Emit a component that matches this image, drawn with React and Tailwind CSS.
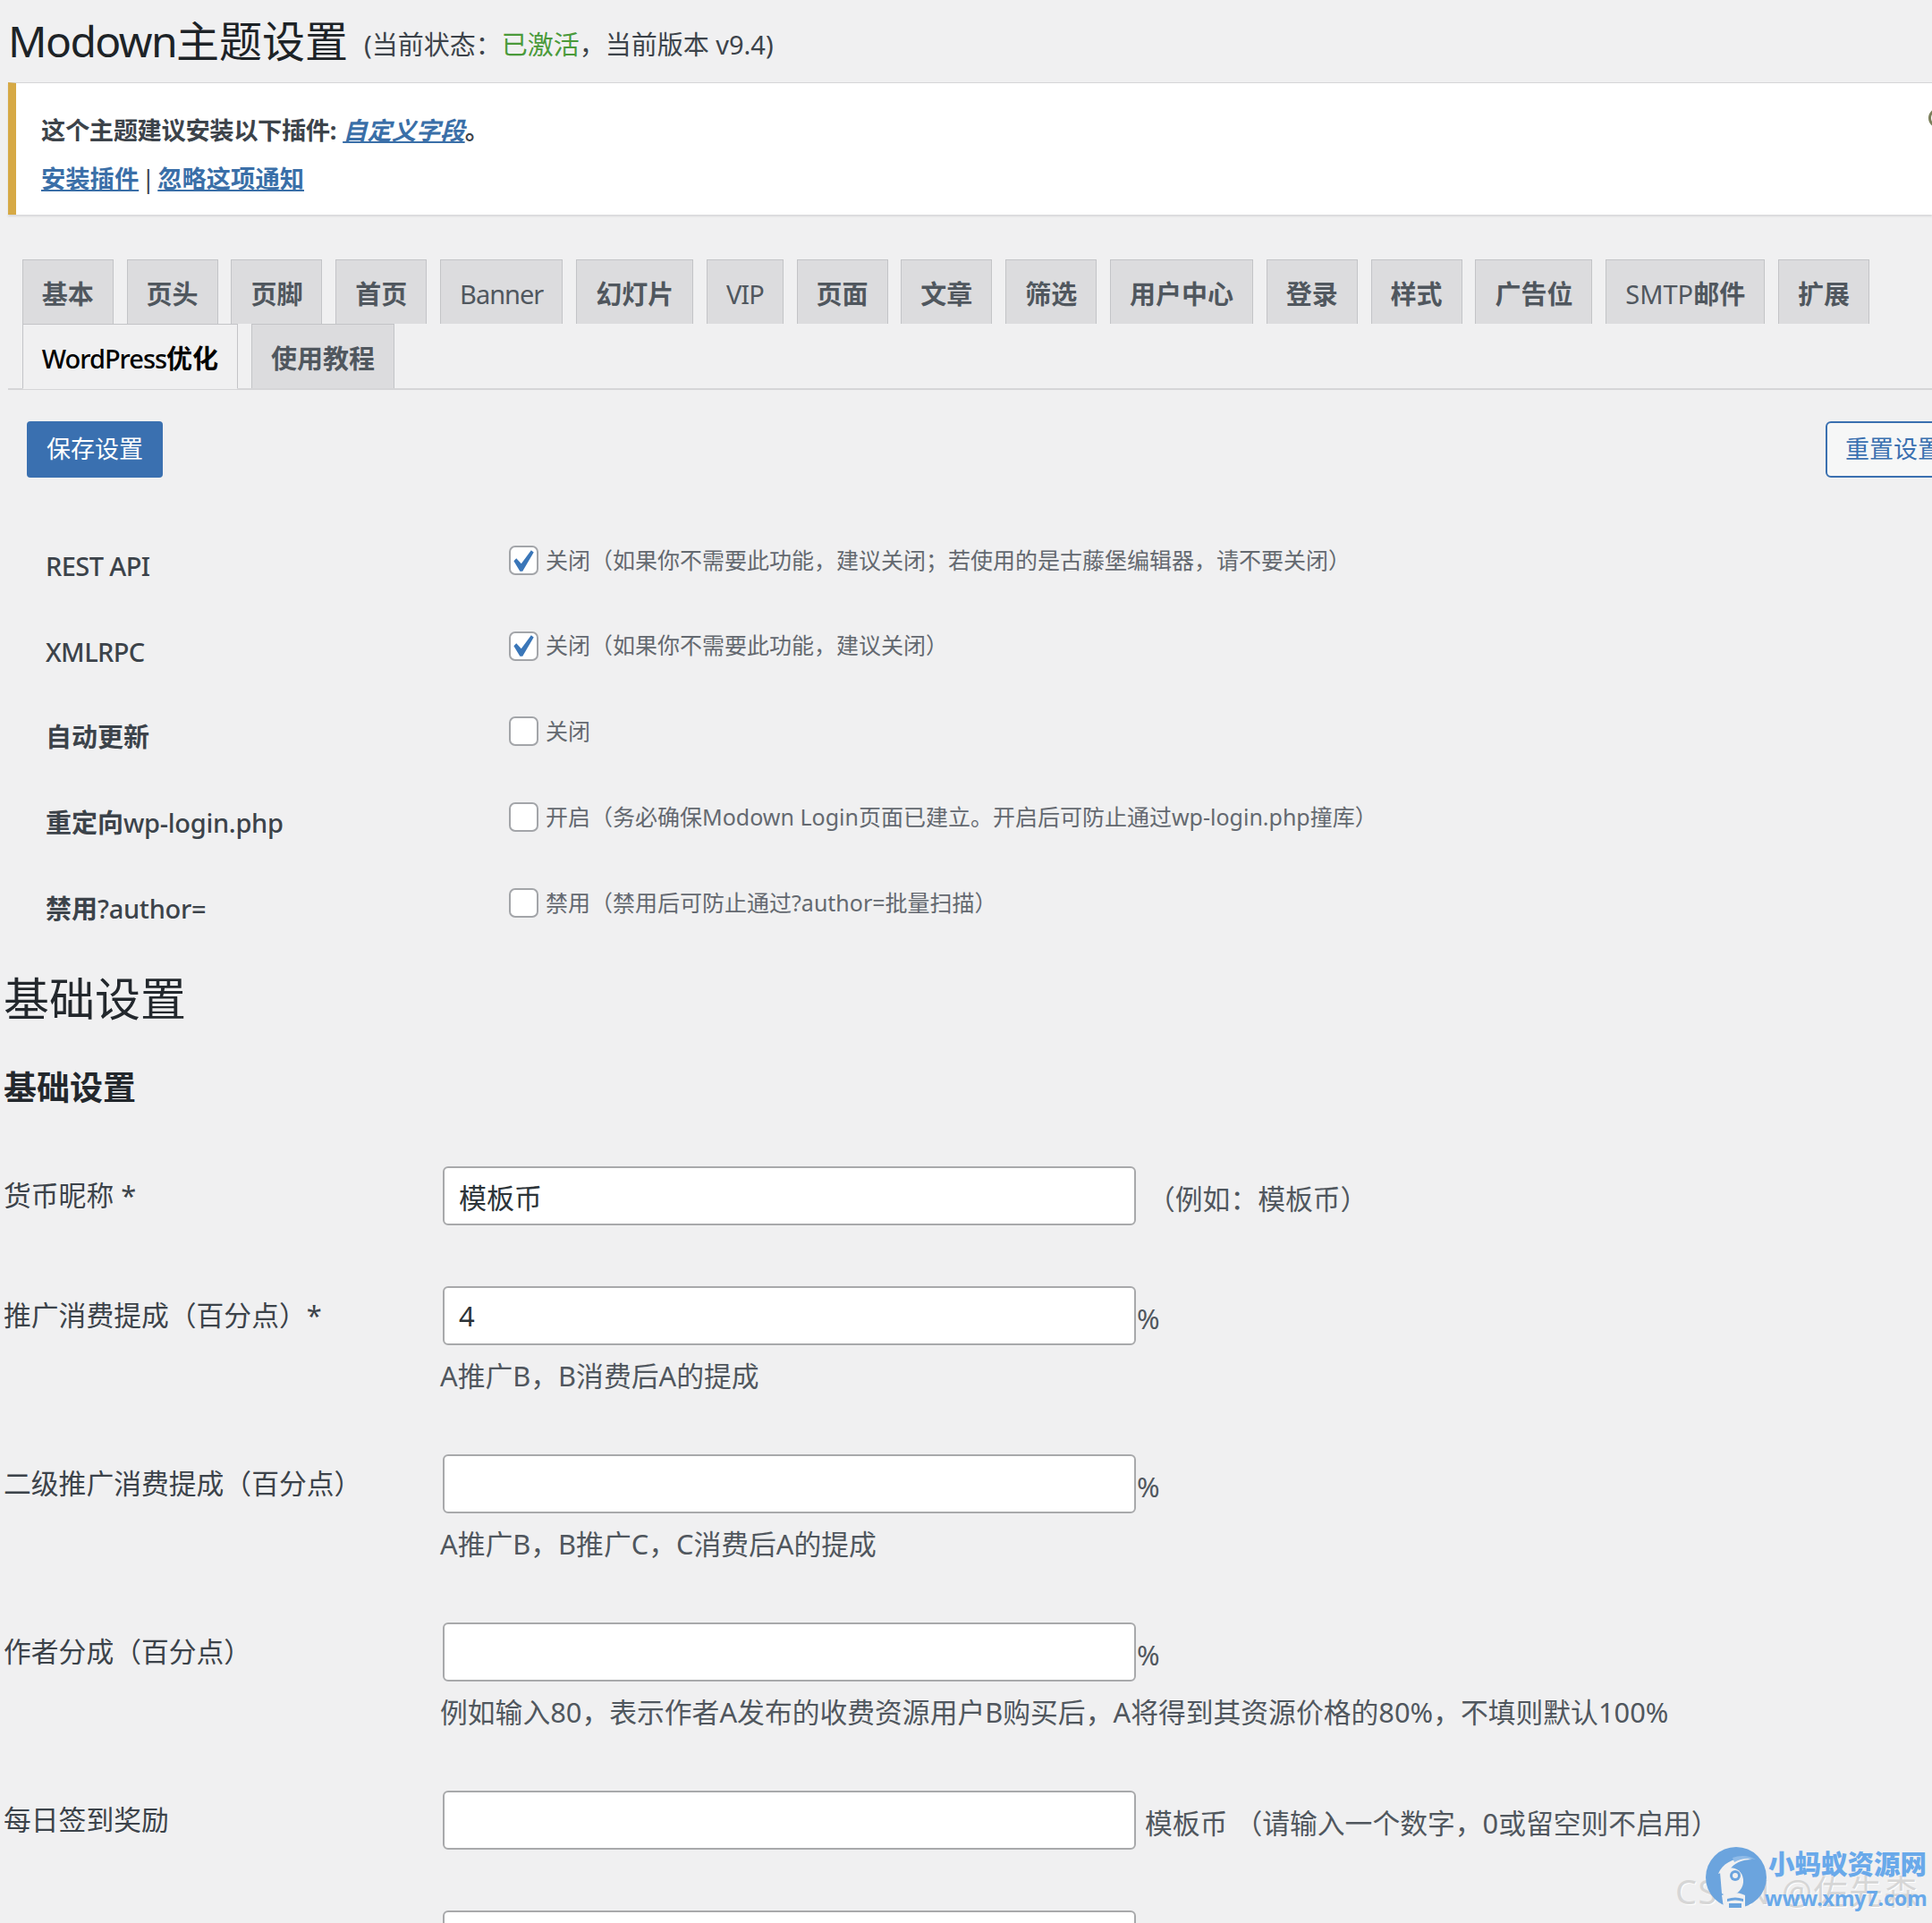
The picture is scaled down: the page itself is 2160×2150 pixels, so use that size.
import React from 'react';

const lat = 'font-normal tracking-[-1px]';

const tabs = [
  '基本', '页头', '页脚', '首页',
  <span className={lat}>Banner</span>,
  '幻灯片',
  <span className={lat}>VIP</span>,
  '页面', '文章', '筛选', '用户中心', '登录', '样式', '广告位',
  <><span className="font-normal">SMTP</span>邮件</>,
  '扩展',
];

const options = [
  { id: 'rest', label: <span className="tracking-[-0.6px]">REST API</span>, checked: true, text: '关闭（如果你不需要此功能，建议关闭；若使用的是古藤堡编辑器，请不要关闭）' },
  { id: 'xml', label: <span className="tracking-[-0.6px]">XMLRPC</span>, checked: true, text: '关闭（如果你不需要此功能，建议关闭）' },
  { id: 'auto', label: <b>自动更新</b>, text: '关闭' },
  { id: 'login', label: <><b>重定向</b><span className="tracking-[-0.3px]">wp-login.php</span></>, text: '开启（务必确保Modown Login页面已建立。开启后可防止通过wp-login.php撞库）' },
  { id: 'author', label: <><b>禁用</b><span className="tracking-[-0.3px]">?author=</span></>, text: '禁用（禁用后可防止通过?author=批量扫描）' },
];

function Tab({ children, active }) {
  return (
    <a className={active
      ? 'ml-[14.8px] h-[73px] -mb-[2px] pt-[4px] px-[21px] flex items-center border border-[#c3c4c7] border-b-[#f0f0f1] bg-[#f0f0f1] text-[29px] font-bold text-black'
      : 'ml-[14.8px] h-[72px] pt-[4px] px-[21px] flex items-center border border-b-0 border-[#c3c4c7] bg-[#dcdcde] text-[29px] font-bold text-[#50575e]'}>
      {children}
    </a>
  );
}

function Check({ checked }) {
  return (
    <span className="w-[33px] h-[33px] shrink-0 flex items-center justify-center rounded-[7px] border-2 border-[#a3a5a9] bg-white">
      {checked && (
        <svg className="w-[23px] h-[24px]" viewBox="5.6 4.8 10.7 9.5" preserveAspectRatio="none">
          <path fill="#3a76b8" d="M14.83 4.89l1.34.94-5.81 8.38H9.02L5.78 9.67l1.34-1.25 2.57 2.4z" />
        </svg>
      )}
    </span>
  );
}

function OptionRow({ label, checked, text }) {
  return (
    <div className="flex h-[95.7px]">
      <div className="w-[569px] shrink-0 pl-[51px] pt-[28px] text-[29px] leading-[40px] text-[#3c434a] font-medium">{label}</div>
      <div className="flex items-center gap-[8px] h-[33px] mt-[25px] text-[25px] text-[#646970] whitespace-nowrap">
        <Check checked={checked} />
        <span>{text}</span>
      </div>
    </div>
  );
}

function FormRow({ label, value = '', after, hint }) {
  return (
    <div className="flex pb-[68px]">
      <div className="w-[495px] shrink-0 pl-[4px] pt-[10px] text-[30.8px] leading-[44px] text-[#3c434a]">{label}</div>
      <div>
        <div className="flex items-center">
          <input
            readOnly
            defaultValue={value}
            className="w-[775px] h-[66px] px-[16px] rounded-[6px] border-2 border-[#a8a9ab] bg-white text-[31px] text-[#2c3338] outline-none"
          />
          <span className="pl-px pt-[6px] text-[30.8px] text-[#50575e] whitespace-nowrap">{after}</span>
        </div>
        {hint && <p className="mt-[14px] -ml-[3px] text-[30.8px] leading-[40px] text-[#50575e] whitespace-nowrap">{hint}</p>}
      </div>
    </div>
  );
}

function Watermark() {
  return (
    <div className="absolute left-[1873px] top-[2062px] w-[287px] h-[80px]">
      <div className="absolute left-0 top-[30px] text-[38px] leading-[44px] tracking-[1.5px] text-[#d6d6d6] whitespace-nowrap [text-shadow:1px_1px_0_#ffffff]">CSDN @佐先森</div>
      <svg className="absolute left-[34px] top-[3px]" width="68" height="68" viewBox="0 0 68 68">
        <circle cx="34" cy="34" r="34" fill="#6ba4de" />
        <path d="M14 30c6-14 22-20 38-16-12 0-20 4-26 12z" fill="#f0f0f1" />
        <path d="M30 12c8-3 18-3 26 2-9-2-17-1-24 3z" fill="#8fbbe8" />
        <path d="M16 28c8-8 24-6 26 8 1 10-6 18-16 18-4 0-6-1-8-2z" fill="#f0f0f1" />
        <circle cx="33" cy="32" r="6" fill="#6ba4de" />
        <circle cx="33" cy="32" r="3" fill="#f0f0f1" />
        <path d="M18 54c8-4 18-4 26 0v14H20z" fill="#f0f0f1" />
        <path d="M24 58c6-2 12-2 18 0v3c-6-2-12-2-18 0zM26 63h14v5H26z" fill="#6ba4de" />
      </svg>
      <div className="absolute left-[104px] top-[4px] text-[29.5px] leading-[36px] font-black text-[#69a9ea] whitespace-nowrap">小蚂蚁资源网</div>
      <div className="absolute left-[100px] top-[47px] text-[23px] leading-[26px] font-bold text-[#69a9ea] whitespace-nowrap">www.xmy7.com</div>
    </div>
  );
}

export default function App() {
  return (
    <div className="relative w-[2160px] h-[2150px] overflow-hidden bg-[#f0f0f1] font-['Noto_Sans','Noto_Sans_CJK_SC',sans-serif] text-[#3c434a]">
      <h1 className="h-[92px] pl-[9px] flex items-center text-[48px] text-[#1d2327] whitespace-nowrap">
        <span className="tracking-[-1.6px]">Modown</span>主题设置
        <span className="ml-[18px] mt-[8px] text-[29px] text-[#3c434a]">
          (当前状态：<span className="text-[#4a9a3a]">已激活</span>，当前版本 v9.4)
        </span>
      </h1>

      <div className="relative ml-[9px] h-[148px] border-l-[9px] border-[#d6a945] border-t border-t-[#d5d5d7] bg-white shadow-[0_2px_2px_#d8d8da] text-[27.3px] font-bold text-[#3c434a]">
        <p className="pl-[28px] pt-[33px] leading-[40px]">
          <span className="tracking-[-0.4px]">这个主题建议安装以下插件:</span> <a className="italic text-[#3a6fa8] underline">自定义字段</a>。
        </p>
        <p className="pl-[28px] pt-[14px] leading-[40px]">
          <a className="text-[#3a6fa8] underline">安装插件</a><span className="mx-[3px] font-normal">|</span><a className="text-[#3a6fa8] underline">忽略这项通知</a>
        </p>
        <span className="absolute left-[2138px] top-[28px] w-[22px] h-[22px] rounded-full border-[3px] border-[#7b7f5a]" />
      </div>

      <div className="mt-[50px] ml-[9px] pl-px flex flex-wrap border-b-2 border-[#d5d5d7]">
        {tabs.map((t, i) => <Tab key={i}>{t}</Tab>)}
        <Tab active><span className="tracking-[-1px] font-medium">WordPress</span>优化</Tab>
        <Tab>使用教程</Tab>
      </div>

      <div className="mt-[35px] pl-[30px] flex">
        <button className="w-[152px] h-[63px] shrink-0 rounded-[4px] bg-[#3a70b0] text-white text-[27px]">保存设置</button>
        <button className="ml-[1859px] w-[152px] h-[63px] shrink-0 rounded-[6px] border-2 border-[#3a70b0] bg-[#f6f7f7] text-[#3a70b0] text-[27px]">重置设置</button>
      </div>

      <div className="mt-[51px]">
        {options.map(o => <OptionRow key={o.id} {...o} />)}
      </div>

      <h2 className="mt-[18px] pl-[4px] text-[51px] leading-[70px] text-[#23282d]">基础设置</h2>
      <h3 className="mt-[40px] pl-[4px] text-[37px] leading-[50px] font-bold text-[#23282d]">基础设置</h3>

      <div className="mt-[63px]">
        <FormRow label="货币昵称 *" value="模板币" after={<span className="pl-[12px]">（例如：模板币）</span>} />
        <FormRow label="推广消费提成（百分点）*" value="4" after="%" hint="A推广B，B消费后A的提成" />
        <FormRow label="二级推广消费提成（百分点）" after="%" hint="A推广B，B推广C，C消费后A的提成" />
        <FormRow label="作者分成（百分点）" after="%" hint="例如输入80，表示作者A发布的收费资源用户B购买后，A将得到其资源价格的80%，不填则默认100%" />
        <FormRow label="每日签到奖励" after={<span className="pl-[9px]">模板币 （请输入一个数字，0或留空则不启用）</span>} />
        <FormRow label="" />
      </div>

      <Watermark />
    </div>
  );
}
